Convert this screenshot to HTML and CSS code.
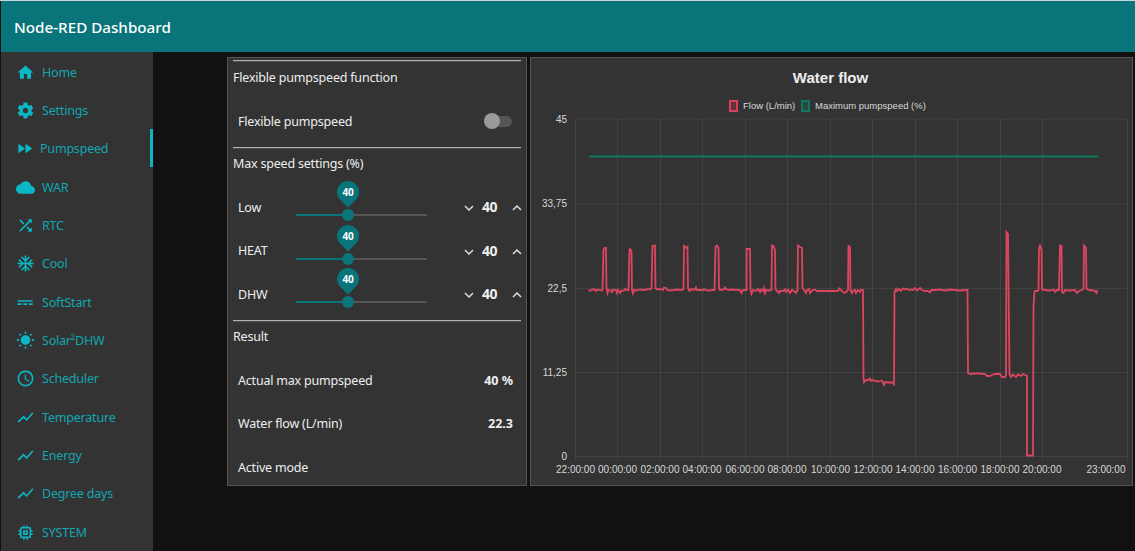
FILE: index.html
```html
<!DOCTYPE html>
<html lang="en">
<head>
  <meta charset="UTF-8" />
  <title>Node-RED Dashboard</title>
  <link rel="stylesheet" href="styles.css">
</head>
<body>
  <div class="page">
    <header class="toolbar">Node-RED Dashboard</header>

    <div class="main">
      <!-- Side menu -->
      <nav class="sidenav">
        <a class="nav-item"><svg class="nav-icon" viewBox="0 0 24 24"><path d="M10 20v-6h4v6h5v-8h3L12 3 2 12h3v8z"/></svg>Home</a>
        <a class="nav-item"><svg class="nav-icon" viewBox="0 0 24 24"><path d="M19.43 12.98c.04-.32.07-.64.07-.98s-.03-.66-.07-.98l2.11-1.65c.19-.15.24-.42.12-.64l-2-3.46c-.12-.22-.39-.3-.61-.22l-2.49 1c-.52-.4-1.08-.73-1.69-.98l-.38-2.65C14.46 2.18 14.25 2 14 2h-4c-.25 0-.46.18-.49.42l-.38 2.65c-.61.25-1.17.59-1.69.98l-2.49-1c-.23-.09-.49 0-.61.22l-2 3.46c-.13.22-.07.49.12.64l2.11 1.65c-.04.32-.07.65-.07.98s.03.66.07.98l-2.11 1.65c-.19.15-.24.42-.12.64l2 3.46c.12.22.39.3.61.22l2.49-1c.52.4 1.08.73 1.69.98l.38 2.65c.03.24.24.42.49.42h4c.25 0 .46-.18.49-.42l.38-2.65c.61-.25 1.17-.59 1.69-.98l2.49 1c.23.09.49 0 .61-.22l2-3.46c.12-.22.07-.49-.12-.64l-2.11-1.65zM12 15.5c-1.93 0-3.5-1.57-3.5-3.5s1.57-3.5 3.5-3.5 3.5 1.57 3.5 3.5-1.57 3.5-3.5 3.5z"/></svg>Settings</a>
        <a class="nav-item active"><svg class="nav-icon" viewBox="1 0 24 24"><path d="M4 18l8.500-6L4 6v12zm9-12v12l8.500-6L13 6z"/></svg>Pumpspeed</a>
        <a class="nav-item"><svg class="nav-icon" viewBox="0 0 24 24"><path d="M19.35 10.04C18.67 6.59 15.64 4 12 4 9.11 4 6.6 5.64 5.35 8.04 2.34 8.36 0 10.91 0 14c0 3.31 2.69 6 6 6h13c2.76 0 5-2.24 5-5 0-2.64-2.05-4.78-4.65-4.96z"/></svg>WAR</a>
        <a class="nav-item"><svg class="nav-icon" viewBox="0 0 24 24"><path d="M10.59 9.17L5.41 4 4 5.41l5.17 5.17 1.42-1.41zM14.5 4l2.04 2.04L4 18.59 5.41 20 17.96 7.46 20 9.5V4h-5.5zm.33 9.41l-1.41 1.41 3.13 3.13L14.5 20H20v-5.5l-2.04 2.04-3.13-3.13z"/></svg>RTC</a>
        <a class="nav-item"><svg class="nav-icon" viewBox="0 0 24 24"><path d="M22 11h-4.17l3.24-3.24-1.41-1.42L15 11h-2V9l4.66-4.66-1.42-1.41L13 6.17V2h-2v4.17L7.76 2.93 6.34 4.34 11 9v2H9L4.34 6.34 2.93 7.76 6.17 11H2v2h4.17l-3.24 3.24 1.41 1.42L9 13h2v2l-4.66 4.66 1.42 1.41L11 17.83V22h2v-4.17l3.24 3.24 1.42-1.41L13 15v-2h2l4.66 4.66 1.41-1.42L17.83 13H22z"/></svg>Cool</a>
        <a class="nav-item"><svg class="nav-icon" viewBox="0 0 24 24"><path d="M2 9v2h19V9H2zm0 6h5v-2H2v2zm7 0h5v-2H9v2zm7 0h5v-2h-5v2z"/></svg>SoftStart</a>
        <a class="nav-item"><svg class="nav-icon" viewBox="0 0 24 24"><path d="M6.76 4.84l-1.8-1.79-1.41 1.41 1.79 1.79 1.42-1.41zM4 10.5H1v2h3v-2zm9-9.95h-2V3.5h2V.55zm7.45 3.91l-1.41-1.41-1.79 1.79 1.41 1.41 1.79-1.79zm-3.21 13.7l1.79 1.8 1.41-1.41-1.8-1.79-1.4 1.4zM20 10.5v2h3v-2h-3zm-8-5c-3.31 0-6 2.69-6 6s2.69 6 6 6 6-2.69 6-6-2.69-6-6-6zm-1 16.95h2V19.5h-2v2.95zm-7.45-3.91l1.41 1.41 1.79-1.8-1.41-1.41-1.79 1.8z"/></svg>Solar²DHW</a>
        <a class="nav-item"><svg class="nav-icon" viewBox="0 0 24 24"><path d="M11.99 2C6.47 2 2 6.48 2 12s4.47 10 9.99 10C17.52 22 22 17.52 22 12S17.52 2 11.99 2zM12 20c-4.42 0-8-3.58-8-8s3.58-8 8-8 8 3.58 8 8-3.58 8-8 8zm.5-13H11v6l5.25 3.15.75-1.23-4.5-2.67z"/></svg>Scheduler</a>
        <a class="nav-item"><svg class="nav-icon" viewBox="0 0 24 24"><path d="M3.5 18.49l6-6.01 4 4L22 6.92l-1.41-1.41-7.09 7.97-4-4L2 16.99z"/></svg>Temperature</a>
        <a class="nav-item"><svg class="nav-icon" viewBox="0 0 24 24"><path d="M3.5 18.49l6-6.01 4 4L22 6.92l-1.41-1.41-7.09 7.97-4-4L2 16.99z"/></svg>Energy</a>
        <a class="nav-item"><svg class="nav-icon" viewBox="0 0 24 24"><path d="M3.5 18.49l6-6.01 4 4L22 6.92l-1.41-1.41-7.09 7.97-4-4L2 16.99z"/></svg>Degree days</a>
        <a class="nav-item"><svg class="nav-icon" viewBox="0 0 24 24"><path d="M15 9H9v6h6V9zm-2 4h-2v-2h2v2zm8-2V9h-2V7c0-1.1-.9-2-2-2h-2V3h-2v2h-2V3H9v2H7c-1.1 0-2 .9-2 2v2H3v2h2v2H3v2h2v2c0 1.1.9 2 2 2h2v2h2v-2h2v2h2v-2h2c1.1 0 2-.9 2-2v-2h2v-2h-2v-2h2zm-4 6H7V7h10v10z"/></svg>SYSTEM</a>
      </nav>

      <div class="content">
        <!-- Settings card -->
        <section class="card settings">
          <div class="group">
            <h3 class="group-title">Flexible pumpspeed function</h3>
            <div class="row">
              <span>Flexible pumpspeed</span>
              <span class="switch"><span class="switch-thumb"></span></span>
            </div>
          </div>

          <div class="group">
            <h3 class="group-title">Max speed settings (%)</h3>
            <div class="row">
              <span class="row-label">Low</span>
              <div class="slider">
                <div class="slider-fill" style="width: 40%"><span class="pin"><span class="pin-text">40</span></span></div>
              </div>
              <div class="stepper">
                <svg class="chevron" viewBox="0 0 10 6"><path d="M1 1l4 4 4-4"/></svg>
                <b class="step-value">40</b>
                <svg class="chevron up" viewBox="0 0 10 6"><path d="M1 5l4-4 4 4"/></svg>
              </div>
            </div>
            <div class="row">
              <span class="row-label">HEAT</span>
              <div class="slider">
                <div class="slider-fill" style="width: 40%"><span class="pin"><span class="pin-text">40</span></span></div>
              </div>
              <div class="stepper">
                <svg class="chevron" viewBox="0 0 10 6"><path d="M1 1l4 4 4-4"/></svg>
                <b class="step-value">40</b>
                <svg class="chevron up" viewBox="0 0 10 6"><path d="M1 5l4-4 4 4"/></svg>
              </div>
            </div>
            <div class="row">
              <span class="row-label">DHW</span>
              <div class="slider">
                <div class="slider-fill" style="width: 40%"><span class="pin"><span class="pin-text">40</span></span></div>
              </div>
              <div class="stepper">
                <svg class="chevron" viewBox="0 0 10 6"><path d="M1 1l4 4 4-4"/></svg>
                <b class="step-value">40</b>
                <svg class="chevron up" viewBox="0 0 10 6"><path d="M1 5l4-4 4 4"/></svg>
              </div>
            </div>
          </div>

          <div class="group">
            <h3 class="group-title">Result</h3>
            <div class="row"><span>Actual max pumpspeed</span><b class="value">40 %</b></div>
            <div class="row"><span>Water flow (L/min)</span><b class="value">22.3</b></div>
            <div class="row"><span>Active mode</span></div>
          </div>
        </section>

        <!-- Chart card -->
        <section class="card chart-card">
          <svg class="chart" viewBox="531 58 601 427">
            <text class="chart-title" x="830.5" y="83">Water flow</text>

            <rect class="legend-flow" x="730" y="101" width="7" height="10"/>
            <text class="legend-text" x="743" y="108.5">Flow (L/min)</text>
            <rect class="legend-max" x="802" y="101" width="7" height="10"/>
            <text class="legend-text" x="815" y="108.5">Maximum pumpspeed (%)</text>

            <g class="grid">
              <path d="M575.5 119H1127M575.5 204H1127M575.5 288.5H1127M575.5 372.500H1127M575.5 456.500H1127"/>
              <path d="M575.500 119V461M617.500 119V461M660.500 119V461M702.500 119V461M745.500 119V461M787.500 119V461M830.500 119V461M872.500 119V461M915.500 119V461M957.500 119V461M1000.500 119V461M1042.500 119V461M1127.500 119V461"/>
            </g>

            <g class="y-labels">
              <text x="567" y="122.500">45</text>
              <text x="567" y="207">33,75</text>
              <text x="567" y="291.500">22,5</text>
              <text x="567" y="375.500">11,25</text>
              <text x="567" y="459.500">0</text>
            </g>
            <g class="x-labels">
              <text x="575.500" y="473">22:00:00</text>
              <text x="617.500" y="473">00:00:00</text>
              <text x="660" y="473">02:00:00</text>
              <text x="702" y="473">04:00:00</text>
              <text x="745" y="473">06:00:00</text>
              <text x="787" y="473">08:00:00</text>
              <text x="830.500" y="473">10:00:00</text>
              <text x="873" y="473">12:00:00</text>
              <text x="915" y="473">14:00:00</text>
              <text x="957.500" y="473">16:00:00</text>
              <text x="1000" y="473">18:00:00</text>
              <text x="1042" y="473">20:00:00</text>
              <text x="1106" y="473">23:00:00</text>
            </g>

            <path class="line-max" d="M589 156.500H1098"/>
            <path class="line-flow" d="M588.500 290 590 291 592 289.500 595 289.500 596 291 598 289.500 601 290.500 602.500 290 603.500 250 604.500 248 606 248 606.500 288 607.500 293 608.500 290 611 290.500 612 292 613 289.500 616 290 617 293 618 290 620 293 621 291 624 290.500 625 289 627 290 628.500 290 629.500 250 630 249 631.500 251 632 290 633 293.500 634 290 637 290.500 640 289.500 645 290 648 289 650 289.500 651.500 288 652.500 246 655 245.500 655.500 288 657 289.500 660 289 663 290 664 287.500 666 288 667 290 670 290.500 674 290 677 289.500 682 290 683.500 289 684 246 686 247.500 686.500 248 687.500 247 688 288 689.500 291 691 289.500 695 289.500 696 287.500 697 290 700 290 703 290 704 289 707 290.500 710 290.500 712 290 714.500 290 715.500 247 717 245.500 718.500 248 719 288 720 290 724 289.500 725 287.500 726 289 729 290 732 289.500 740 290 741.500 293 743 290 745 290 746.500 290 746.700 249 750 249 750.500 290 751.500 294 753 290 756 291 758 289 760 292 761 289.500 763 291 764 288 765 293 766 290 769 290.500 771.500 290 772 245.500 773.500 246 775 250 775.500 289 777 291 779 293 780 291 783 291 785 289.500 786 292 788 289.500 790 293 792 290 794 291 796 293 797.500 290 798 245.500 800 247 802 248 802.500 288 804 290 806 293 807 290 809 289 810 293 812 290.500 815 289.500 817 291 830 291 835 291 838 291 839 288.500 841 290 843 292 845 293 846 292 848 290 848.500 246 850 247 850.500 290 852 293 853 291 855 290 856 293 858 290 860 292 861 290 863 290 863.500 378 864 382 866 380 868 380 870 378.500 871 381 873 380 875 381 878 381.500 880 381 882 380.500 883 383 884 385 885 382 888 382.500 892 382.500 893.500 382.500 894 385.500 894.500 292 896 289 897 291 899 289 901 291 903 288.500 905 289.500 907 288.500 909 290 911 289.500 913 290 915 288 917 290.500 920 288 922 290 925 291 928 291 930 292.500 931.500 290 935 290 940 289.500 945 290.500 950 289.500 955 290 960 290.500 965 290 967.500 290 968 373 970 374 975 373.500 980 373.500 985 374 987 376 990 376 992 375 995 374 1000 374 1002 377 1005 377 1006 375 1006.500 232 1008 234 1009.500 374 1011 377 1013 374.500 1016 377 1018 374.500 1021 376 1023 374 1025.500 375 1027 376 1027 455.500 1033 455.500 1033.500 307 1034.500 292 1035 291 1037.500 291 1038.500 290 1039 250 1040 244.500 1041.500 250 1042 289.500 1045 290 1050 290.500 1054 289.500 1055 292 1057 290 1059 290 1060 245.500 1061.500 246 1062 292 1063.500 293 1065 290 1070 290.500 1075 290 1077 293 1079 291 1082 290 1083.500 289 1084 245.500 1086 248 1086.500 289 1089 290 1093 290.500 1095 291 1096.500 293 1097.500 290"/>
          </svg>
        </section>
      </div>
    </div>
  </div>
</body>
</html>
```

FILE: styles.css
```css
* {
  box-sizing: border-box;
}

body {
  margin: 0;
  background-color: #111;
  font-family: "Noto Sans", sans-serif;
  font-size: 12.5px;
  letter-spacing: -0.2px;
  color: #eee;
  overflow: hidden;
}

.page {
  display: flex;
  flex-direction: column;
  height: 551px;
  padding-left: 1px;
  border-top: 1px solid #c9d4d4;
}

.toolbar {
  display: flex;
  align-items: center;
  flex: none;
  height: 51px;
  padding-left: 13px;
  background: #097479;
  color: #fff;
  font-size: 15.2px;
  font-weight: 500;
  letter-spacing: 0;
}

.main {
  display: flex;
  flex: 1;
  min-height: 0;
}

/* side menu */
.sidenav {
  flex: none;
  width: 152px;
  background: #333;
}

.nav-item {
  display: flex;
  align-items: center;
  gap: 7px;
  height: 38.33px;
  padding: 2px 0 0 15px;
  color: #12a6b2;
}

.nav-item.active {
  gap: 5px;
  border-right: 3px solid #0bb7c4;
}

.nav-icon {
  flex: none;
  width: 19px;
  height: 19px;
  fill: #0bb7c4;
}

/* cards */
.content {
  display: flex;
  flex: 1;
  gap: 3px;
  padding: 5px 2px 65px 74px;
}

.card {
  background: #333;
  border: 1px solid #555;
}

.settings {
  flex: none;
  width: 300px;
  padding: 2px 5px 0;
}

.chart-card {
  flex: 1;
}

.group {
  border-top: 1px solid #b5b0aa;
  box-shadow: inset 0 1px 0 #4c4c4c;
  padding-bottom: 5px;
}

.group-title {
  margin: 0 0 6px;
  height: 31px;
  line-height: 31px;
  font-size: 12.5px;
  font-weight: 400;
}

.group:first-child .group-title {
  margin-top: 1px;
}

.row {
  display: flex;
  align-items: center;
  justify-content: space-between;
  height: 43.33px;
  padding: 1px 8px 0 5px;
}

.row-label {
  flex: none;
  width: 58px;
}

.value {
  letter-spacing: 0;
}

/* switch */
.switch {
  position: relative;
  width: 28px;
  height: 11px;
  margin-right: 1px;
  border-radius: 6px;
  background: #555;
}

.switch-thumb {
  position: absolute;
  left: 0;
  top: -3px;
  width: 16px;
  height: 16px;
  border-radius: 50%;
  background: #9a9a9a;
}

/* slider */
.slider {
  flex: none;
  width: 131px;
  height: 2px;
  margin-top: 16px;
  background: #555;
}

.slider-fill {
  position: relative;
  height: 2px;
  background: #097479;
}

.slider-fill::after {
  content: "";
  position: absolute;
  right: -6px;
  top: -5px;
  width: 12px;
  height: 12px;
  border-radius: 50%;
  background: #097479;
}

.pin {
  position: absolute;
  right: -11px;
  top: -33px;
  width: 22px;
  height: 22px;
  border-radius: 50% 50% 50% 0;
  background: #097479;
  transform: rotate(-45deg);
}

.pin-text {
  display: block;
  line-height: 22px;
  text-align: center;
  font-size: 10px;
  font-weight: 700;
  letter-spacing: -0.3px;
  color: #fff;
  transform: rotate(45deg);
}

.stepper {
  display: flex;
  align-items: center;
  flex: none;
  width: 58px;
  margin-left: 37px;
  margin-right: -3px;
}

.chevron {
  flex: none;
  width: 10px;
  height: 6px;
  margin-top: 2px;
  fill: none;
  stroke: #ddd;
  stroke-width: 1.5;
}

.chevron.up {
  margin-left: 15px;
}

.step-value {
  margin-left: 8px;
  width: 15px;
  font-size: 14px;
  letter-spacing: -0.5px;
  line-height: 1;
}

/* chart */
.chart {
  display: block;
  width: 601px;
  height: 427px;
}

.chart-title {
  fill: #eee;
  font-family: "Liberation Sans", sans-serif;
  font-size: 15px;
  font-weight: 700;
  letter-spacing: 0;
  text-anchor: middle;
}

.legend-text,
.y-labels text,
.x-labels text {
  fill: #d8d8d8;
  font-family: "Liberation Sans", sans-serif;
  letter-spacing: 0;
}

.legend-text {
  font-size: 9.5px;
}

.y-labels text,
.x-labels text {
  font-size: 10px;
}

.y-labels text {
  text-anchor: end;
}

.x-labels text {
  text-anchor: middle;
}

.legend-flow {
  fill: rgba(220, 61, 90, 0.25);
  stroke: #dc3d5a;
  stroke-width: 2;
}

.legend-max {
  fill: rgba(15, 122, 95, 0.25);
  stroke: #0f7a5f;
  stroke-width: 2;
}

.grid path {
  fill: none;
  stroke: #424242;
  stroke-width: 1;
}

.line-max {
  fill: none;
  stroke: #0f7a5f;
  stroke-width: 2;
}

.line-flow {
  fill: none;
  stroke: #dc4560;
  stroke-width: 1.8;
}
```
